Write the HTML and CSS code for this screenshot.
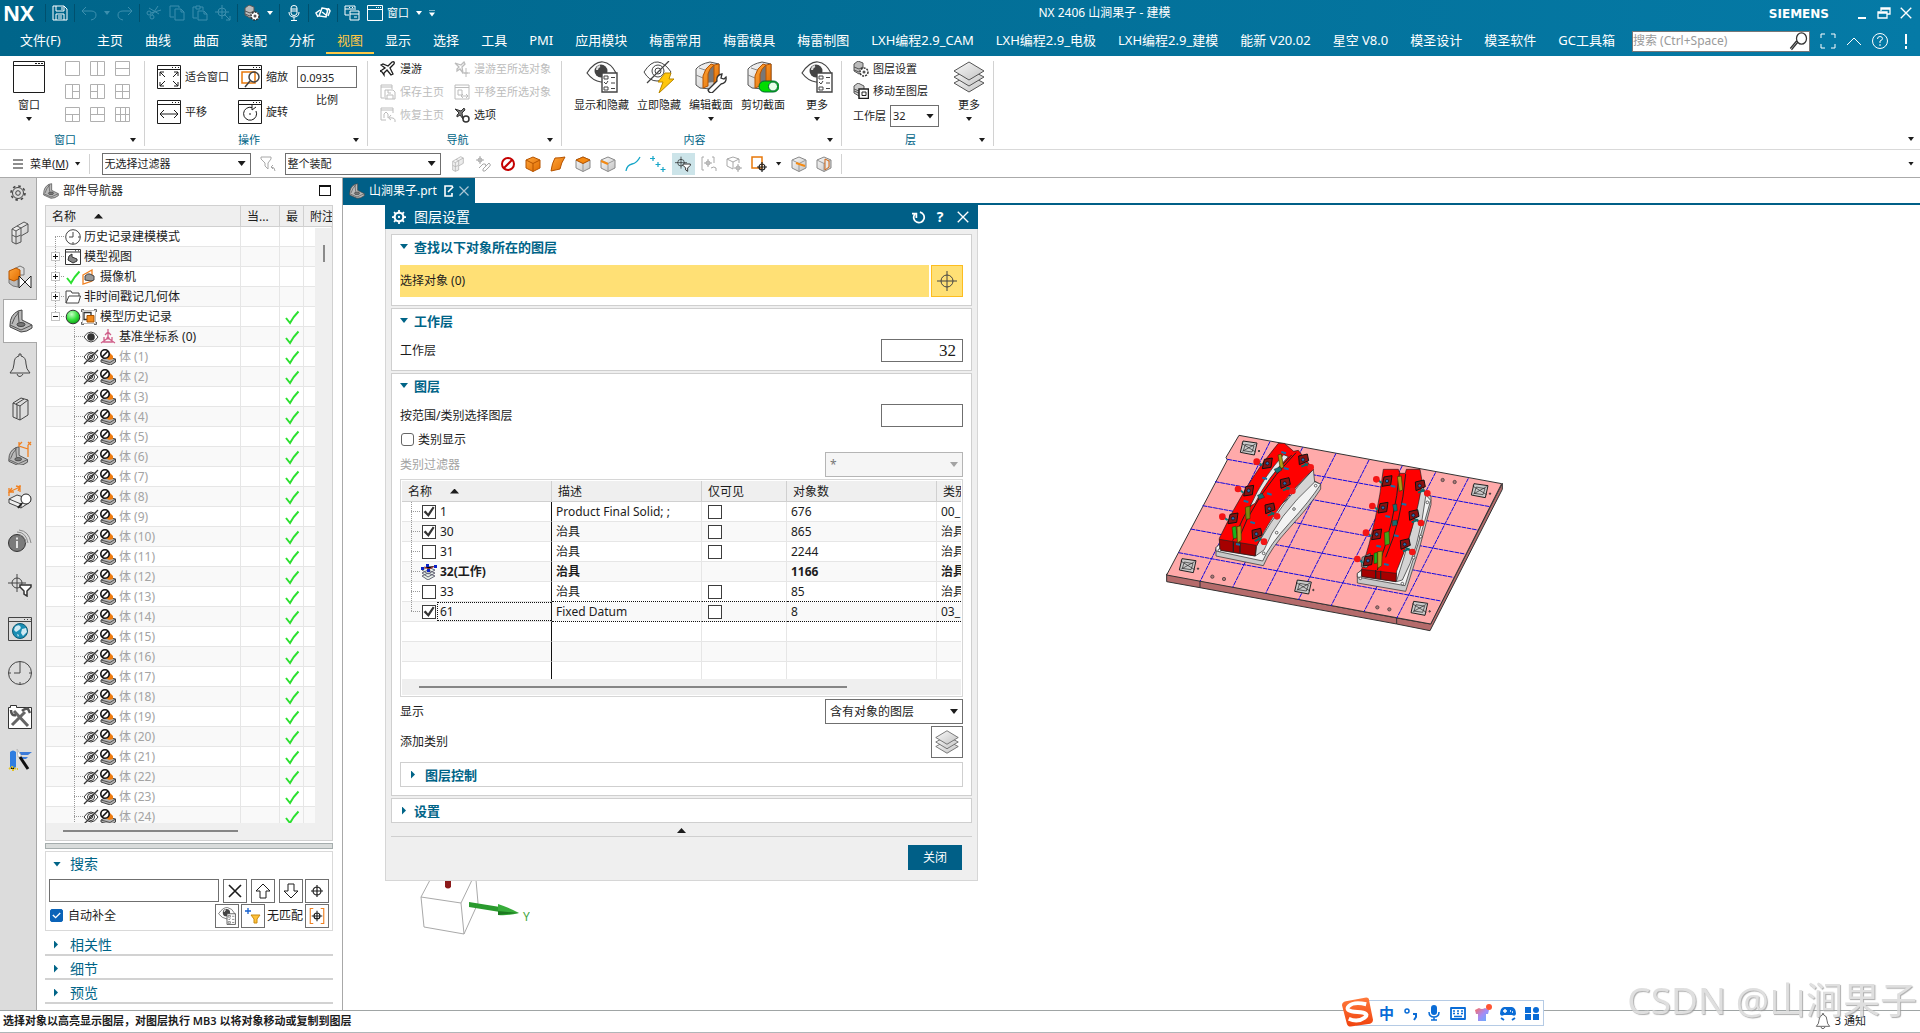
FILE: index.html
```html
<!DOCTYPE html>
<html lang="zh-CN">
<head>
<meta charset="utf-8">
<title>NX 2406 山涧果子 - 建模</title>
<link rel="stylesheet" href="styles.css">
</head>
<body>
<svg class="sprite" aria-hidden="true">
  <defs>
    <linearGradient id="metal" x1="0" y1="0" x2="1" y2="1"><stop offset="0" stop-color="#e4e4e4"/><stop offset="1" stop-color="#8a8a8a"/></linearGradient>
    <linearGradient id="light" x1="0" y1="0" x2="1" y2="1"><stop offset="0" stop-color="#fafafa"/><stop offset="1" stop-color="#c2c2c2"/></linearGradient>
    <linearGradient id="orange" x1="0" y1="0" x2="1" y2="1"><stop offset="0" stop-color="#ffa53a"/><stop offset="1" stop-color="#e06c00"/></linearGradient>
    <linearGradient id="ime" x1="0" y1="0" x2="0" y2="1"><stop offset="0" stop-color="#ff7a3c"/><stop offset="1" stop-color="#f0430f"/></linearGradient>
    <linearGradient id="shirt" x1="0" y1="0" x2="1" y2="1"><stop offset="0" stop-color="#ff6a5a"/><stop offset=".5" stop-color="#a68bf5"/><stop offset="1" stop-color="#5ab4ff"/></linearGradient>
    <radialGradient id="green" cx=".4" cy=".3" r=".7"><stop offset="0" stop-color="#c8ffc8"/><stop offset=".6" stop-color="#34e03c"/><stop offset="1" stop-color="#12a51a"/></radialGradient>
  </defs>
  <symbol id="save" viewBox="0 0 16 16"><path class="ln" d="M1 1h11l3 3v11H1zM4 1v5h8V1M4 15V9h8v6M6 11h4M6 13h4M10 2v3"/></symbol>
  <symbol id="undo" viewBox="0 0 16 16"><path class="ln" d="M5 2L1 6l4 4M1 6h9q5 0 5 4t-5 5"/></symbol>
  <symbol id="redo" viewBox="0 0 16 16"><path class="ln" d="M11 2l4 4-4 4M15 6H6q-5 0-5 4t5 5"/></symbol>
  <symbol id="cut" viewBox="0 0 16 16"><path class="ln" d="M12 1L6 10M3 3l10 6M1 8a2 2 0 1 0 4 0a2 2 0 1 0-4 0M4 12a2 2 0 1 0 4 0a2 2 0 1 0-4 0M5 8l10-3"/></symbol>
  <symbol id="copy" viewBox="0 0 16 16"><path class="ln" d="M10 3V1H1v11h4M6 4h6l3 3v8H6zM12 4v3h3"/></symbol>
  <symbol id="paste" viewBox="0 0 16 16"><path class="ln" d="M5 13H1V2h3M8 2h3v3M4 1h4v3H4zM6 6h6l3 3v6H6zM12 6v3h3"/></symbol>
  <symbol id="aim-arrow" viewBox="0 0 16 16"><path class="ln" d="M7 0v14M0 7h14M3 7a4 4 0 1 0 8 0a4 4 0 1 0-8 0M9 9l6 6M15 11v4h-4"/></symbol>
  <symbol id="stack-gear" viewBox="0 0 16 16"><path d="M1 3l4-3 5 2v9l-4 2-5-3z" fill="#bbb" stroke="#555"/><path d="M1 6l5 2 4-2M1 9l5 2" stroke="#555" fill="none"/><circle cx="11" cy="11" r="4" fill="#fff" stroke="#333" stroke-width="1.5" stroke-dasharray="2 1"/><circle cx="11" cy="11" r="1.5" fill="#555"/></symbol>
  <symbol id="mic" viewBox="0 0 16 16"><path class="ln" d="M5 3q0-2.500 3-2.500T11 3v5q0 2.500-3 2.500T5 8zM5 4h6M5 6h6M3 7q0 5 5 5t5-5M8 12v3M5 15.500h6"/></symbol>
  <symbol id="touch" viewBox="0 0 16 16"><path class="ln" d="M7 3l6 1-2 8-7-1zM5 5L1 8l2 4M11 5q3-3 4 1l-2 5M7 7l4 3" stroke-width="1.500"/></symbol>
  <symbol id="windows" viewBox="0 0 16 16"><path class="ln" d="M5 10H1V1h10v4M1 4h9M6 6h9v9H6zM6 9h9M10 12h3M5 2.500h1M8 2.500h1"/></symbol>
  <symbol id="window" viewBox="0 0 16 16"><path class="ln" d="M.5.5h15v15H.5zM.5 4.500h15M9 2.500h1M11 2.500h1M13 2.500h1"/></symbol>
  <symbol id="bigwin" viewBox="0 0 32 32"><path class="ln" d="M.5.5h31v31H.5zM.5 4.500h31M22 2.500h2M25 2.500h2M28 2.500h2"/></symbol>
  <symbol id="mag" viewBox="0 0 16 16"><path class="ln" d="M6 6a4 4.500 0 1 1 8 0a4 4.500 0 1 1-8 0M7 9l-5 6M6 8l-5 6"/></symbol>
  <symbol id="corners" viewBox="0 0 16 16"><path class="ln" d="M1 5V1h4M11 1h4v4M15 11v4h-4M5 15H1v-4"/></symbol>
  <symbol id="chev" viewBox="0 0 16 16"><path class="ln" d="M1 12l7-7 7 7"/></symbol>
  <symbol id="help" viewBox="0 0 16 16"><path class="ln" d="M.5 8a7.500 7.500 0 1 1 15 0a7.500 7.500 0 1 1-15 0M5.500 6q0-2.500 2.500-2.500t2.500 2.200Q10.500 7 8 8v2M8 11v2"/></symbol>
  <symbol id="fit" viewBox="0 0 24 24"><path class="ln" d="M.5.5h23v23H.5zM.5 4.500h23M15 2.500h1M18 2.500h1M21 2.500h1M3 11V7h4M3 7l5 5M17 7h4v4M21 7l-5 5M3 17v4h4M3 21l5-5M17 21h4v-4M21 21l-5-5"/></symbol>
  <symbol id="pan" viewBox="0 0 24 24"><path class="ln" d="M.5.5h23v23H.5zM.5 4.500h23M15 2.500h1M18 2.500h1M21 2.500h1M3 14h18M7 10l-4 4 4 4M17 10l4 4-4 4"/></symbol>
  <symbol id="zoomw" viewBox="0 0 24 24"><path class="ln" d="M.5.5h23v23H.5zM.5 4.500h23M15 2.500h1M18 2.500h1M21 2.500h1"/><path d="M4 7h13v11H4z" fill="none" stroke="#e8780a" stroke-width="1.500"/><path d="M11 12a5 5 0 1 1 10 0a5 5 0 1 1-10 0M12 16l-5 6" fill="none" stroke="#444" stroke-width="1.500"/></symbol>
  <symbol id="rotate" viewBox="0 0 24 24"><path class="ln" d="M.5.5h23v23H.5zM.5 4.500h23M15 2.500h1M18 2.500h1M21 2.500h1M14 7.500A6.500 6.500 0 1 0 18 11M14 5v5l4-3M12 13v2"/></symbol>
  <symbol id="plane" viewBox="0 0 16 16"><path class="ln" d="M1 4l2-1 5 2 4-4q3-1 2 2l-4 4 3 6-2 1-4-5-3 3v2l-2-3-2-1 2-1 3-2z" stroke-width="1.300"/></symbol>
  <symbol id="plane-to" viewBox="0 0 16 16"><path class="ln" d="M1 2l6 2 3-3 1 2-3 3 1 6-3-4-3 2V8l2-2z" stroke-width="1.300"/><path class="ln" d="M12 7v9M8 12h8M10 12h4"/></symbol>
  <symbol id="plane-gear" viewBox="0 0 16 16"><path d="M1 2l6 2 3-3 1 2-3 3 1 6-3-4-3 2V8l2-2z" fill="#777" stroke="#333"/><circle cx="12" cy="12" r="3" fill="#fff" stroke="#333" stroke-width="1.500"/></symbol>
  <symbol id="savehome" viewBox="0 0 16 16"><path class="ln" d="M12 5V1H1v13h3M1 3h11M5 6h8l2 2v7H5zM7 15v-4h6v4M8 6v3h3"/></symbol>
  <symbol id="backhome" viewBox="0 0 16 16"><path class="ln" d="M13 6V1H1v12h5M1 3h12M4 11V7l2-2 2 2v4M15 15q1-5-6-4M11 8l-2.500 3 2.500 2"/></symbol>
  <symbol id="view-obj" viewBox="0 0 16 16"><path class="ln" d="M1 1h14v14H1zM1 3.500h14M4 6h4v5H4zM7 12h7M9 10l-2 2 2 2M12 10l2 2-2 2"/></symbol>
  <symbol id="eye-list" viewBox="0 0 32 32"><path d="M1 12Q9 0 17 1t13 11Q23 22 15 21T1 12z" fill="#fff" stroke="#444" stroke-width="1.200"/><circle cx="15" cy="10" r="6.500" fill="#444"/><path d="M14 5q-3 1-3 4" stroke="#ddd" fill="none" stroke-width="2"/><path d="M16 12h15v19H16z" fill="#fff" stroke="#444" stroke-width="1.400"/><path d="M18 15h4v3h-4zM18 26h4v3h-4zM18 21l2 2 2-3M25 16.500h4M25 22h4M25 27.500h4" fill="none" stroke="#444"/></symbol>
  <symbol id="eye-flash" viewBox="0 0 32 32"><path d="M1 11Q8 0 15 1t13 10Q22 20 14 20T1 11z" fill="#fff" stroke="#444"/><circle cx="15" cy="10" r="6" fill="none" stroke="#444"/><circle cx="15" cy="10" r="3" fill="none" stroke="#444"/><path d="M26 0L4 22" stroke="#444" stroke-width="1.300"/><path d="M22 12h6l-2 6h5L16 32l4-11h-5z" fill="#ffc60a" stroke="#b98700"/></symbol>
  <symbol id="section" viewBox="0 0 32 32"><path d="M1 8q4-5 14-7l9 2v18l-8 7-11-1-4-3z" fill="url(#light)" stroke="#555"/><path d="M11 22V12q1-7 7-8l1 0v17z" fill="#777"/><path d="M1 14l7 3M4 7l6 2" stroke="#888"/><path d="M8 27V15q2-8 8-12l3 1q-5 4-6 9v12zM19 4l5-1v18l-5 2z" fill="url(#orange)" stroke="#b65400"/></symbol>
  <symbol id="section-edit" viewBox="0 0 32 32"><use href="#section"/><path d="M13 29l9-9q-1-6 5-7l-1 4 3 1 2-2q1 6-5 7l-9 9q-3 0-4-3z" fill="#fff" stroke="#333" stroke-width="1.300"/></symbol>
  <symbol id="section-clip" viewBox="0 0 32 32"><use href="#section"/><rect x="12" y="20" width="20" height="11" rx="5.500" fill="#0d0" stroke="#063"/><circle cx="26" cy="25.500" r="4.500" fill="#e8ffe8" stroke="#063"/></symbol>
  <symbol id="layers" viewBox="0 0 32 32"><path d="M1 22l15-8 15 8-15 9z" fill="url(#light)" stroke="#555"/><path d="M1 16l15-8 15 8-15 9z" fill="url(#light)" stroke="#555"/><path d="M1 10L16 1l15 9-15 9z" fill="url(#light)" stroke="#555"/></symbol>
  <symbol id="layer-move" viewBox="0 0 16 16"><path d="M1 3l4-3 6 3v5l-5 5-5-3z" fill="#ccc" stroke="#555"/><path d="M1 6l5 2 5-2M1 8l5 2" stroke="#555" fill="none"/><path d="M6 6h9.500v9.500H6z" fill="#fff" stroke="#222" stroke-width="1.500"/><path d="M9 12.500V9h4v3.500z" fill="none" stroke="#222"/></symbol>
  <symbol id="funnel" viewBox="0 0 16 16"><path class="ln" d="M1 1h10v2L8 7v6l-3-3V7L1 3zM15 15q0-4-4-4M13 9l-2 2 2 2"/></symbol>
  <symbol id="cube" viewBox="0 0 16 16"><path d="M8 1l7 3v8l-7 3.500L1 12V4z" fill="url(#light)" stroke="#888"/><path d="M1 4l7 3.500L15 4M8 7.500v8" fill="none" stroke="#999"/></symbol>
  <symbol id="cube-orange" viewBox="0 0 16 16"><path d="M8 1l7 3v8l-7 3.500L1 12V4z" fill="url(#orange)" stroke="#b65400"/><path d="M1 4l7 3.500L15 4M8 7.500v8" fill="none" stroke="#b65400"/></symbol>
  <symbol id="face-orange" viewBox="0 0 16 16"><path d="M5 2q5 0 10-1-4 6-5 12l-9 2q1-8 4-13z" fill="url(#orange)" stroke="#b65400"/></symbol>
  <symbol id="cube-top" viewBox="0 0 16 16"><use href="#cube"/><path d="M8 1l7 3-7 3.500L1 4z" fill="#f58a12" stroke="#b65400"/></symbol>
  <symbol id="cube-edge" viewBox="0 0 16 16"><use href="#cube"/><path d="M1 5l7 3" stroke="#f58a12" stroke-width="2"/></symbol>
  <symbol id="cube-cut" viewBox="0 0 16 16"><use href="#cube"/><path d="M5 7l9 3" stroke="#f58a12" stroke-width="2"/></symbol>
  <symbol id="cube-slice" viewBox="0 0 16 16"><use href="#cube"/><path d="M9 3v11l4-3V5z" fill="#e8e8e8" stroke="#d26510"/></symbol>
  <symbol id="links" viewBox="0 0 16 16"><path class="ln" d="M5 0v8M1 4h8M3 4a2 2 0 1 0 4 0a2 2 0 1 0-4 0M8 13l6-6q3 2 0 4l-4 4q-3 1-2-2zM4 12l4-4q3-1 3 2"/></symbol>
  <symbol id="no" viewBox="0 0 16 16"><circle cx="8" cy="8" r="6" fill="#fff" stroke="#c40000" stroke-width="2"/><path d="M12 4l-8 8" stroke="#c40000" stroke-width="2"/></symbol>
  <symbol id="curve" viewBox="0 0 16 16"><path d="M1 15q1-6 6-7t8-7" fill="none" stroke="#16a6c8" stroke-width="1.300"/></symbol>
  <symbol id="points" viewBox="0 0 16 16"><path d="M3 0v5M0 2.500h5M8 6v5M5.500 8.500h5M13 11v5M10.500 13.500h5" stroke="#16a6c8" stroke-width="1.200"/></symbol>
  <symbol id="aim-filter" viewBox="0 0 24 24"><path class="ln" d="M9 1v18M0 10h18M4 10a5 5 0 1 0 10 0a5 5 0 1 0-10 0"/><path d="M12 12h11v2l-4 4v5l-3-2v-3l-4-4z" fill="#fff" stroke="#333" stroke-width="1.500"/></symbol>
  <symbol id="aim-box" viewBox="0 0 16 16"><path class="ln" d="M3 1H1v13h2M11 1h2v6M7 3v8M3 7h8M5 7a2 2 0 1 0 4 0a2 2 0 1 0-4 0M10 12q3-2 5 0v3"/></symbol>
  <symbol id="cube-aim" viewBox="0 0 16 16"><path class="ln" d="M1 3l6-2 6 2-6 3zM1 3v7l6 3V6M13 3v4M12 8v8M8 12h8M10 12a2 2 0 1 0 4 0a2 2 0 1 0-4 0"/></symbol>
  <symbol id="rect-aim" viewBox="0 0 16 16"><path d="M1 1h10v11H1z" fill="none" stroke="#e8780a" stroke-width="1.500"/><path d="M11 6v10M6 11h10M8 11a3 3 0 1 0 6 0a3 3 0 1 0-6 0" fill="none" stroke="#222" stroke-width="1.200"/></symbol>
  <symbol id="gear" viewBox="0 0 16 16"><circle cx="8" cy="8" r="5.500" class="ln"/><circle cx="8" cy="8" r="2.300" class="ln"/><circle cx="8" cy="8" r="7" fill="none" stroke="currentColor" stroke-width="1.600" stroke-dasharray="2.600 2.900"/></symbol>
  <symbol id="gear-bold" viewBox="0 0 16 16"><circle cx="8" cy="8" r="5" fill="none" stroke="currentColor" stroke-width="2.500"/><circle cx="8" cy="8" r="1.300" fill="currentColor"/><path d="M8 0v3M8 13v3M0 8h3M13 8h3M2.300 2.300l2 2M11.700 11.700l2 2M13.700 2.300l-2 2M2.300 13.700l2-2" stroke="currentColor" stroke-width="2"/></symbol>
  <symbol id="assembly" viewBox="0 0 24 24"><path d="M4 8l5-3 7-4 4 2v8l-7 4v6l-5 2-4-2z" fill="url(#light)" stroke="#555"/><path d="M4 8l4 2v13M8 10l5-3M4 14l4 2 5-2M13 14V7l7-4M9 5l4 2" fill="none" stroke="#555"/></symbol>
  <symbol id="constraint" viewBox="0 0 24 24"><path d="M6 4l6-3 4 2v7H6z" fill="#ddd" stroke="#777"/><path d="M1 14h9v8l-5-1-4-3z" fill="#bbb" stroke="#777"/><path d="M1 6l7-3 4 2v8l-6 3-5-2z" fill="url(#orange)" stroke="#b65400"/><path d="M11 11l12 12V11L11 23z" fill="#fff" stroke="#222"/></symbol>
  <symbol id="bracket" viewBox="0 0 24 24"><path d="M1 16Q1 6 9 2l4-1v10l10 5v3q-5 4-11 4L1 18z" fill="#b9b9b9" stroke="#444"/><path d="M1 16l11 5 11-5M9 2l1 11M3 15q2-7 7-12" fill="none" stroke="#555"/><ellipse cx="12" cy="15.500" rx="4" ry="2" fill="#777" stroke="#444"/></symbol>
  <symbol id="bracket-dim" viewBox="0 0 24 24"><g transform="translate(0 5) scale(.85)"><use href="#bracket" width="24" height="24"/></g><path d="M11 1v4l9 3M20 4v12M20 1l3 3M23 1l-3 3M14 1l-3 3" stroke="#f08020" fill="none" stroke-width="1.300"/></symbol>
  <symbol id="bell" viewBox="0 0 24 24"><path class="ln" d="M2 20h20q-4-4-4-9 0-7-5-8V1h-2v2q-5 1-5 8 0 5-4 9zM9 21q1 3 3 2.500t3-2.500"/></symbol>
  <symbol id="books" viewBox="0 0 24 24"><path class="ln" d="M5 6l8-5 7 2v15l-8 5-7-3zM5 6l7 3v14M12 9l8-6M8 7l8-5M9 8v13"/></symbol>
  <symbol id="measure" viewBox="0 0 24 24"><path d="M1 14l8-4 13 4v3l-9 6-12-5z" fill="#eee" stroke="#444"/><path d="M1 14l12 5 9-5M13 19v4" fill="none" stroke="#444"/><path d="M1 11V3M12 7V0M1 7l11-5M4 3L1 7l5 0M8 1l4 1-2 4" fill="none" stroke="#f08020" stroke-width="1.300"/><circle cx="18" cy="14" r="5" fill="#fff" stroke="#222"/><path d="M14 18l-4 5" stroke="#222" stroke-width="2"/></symbol>
  <symbol id="info" viewBox="0 0 24 24"><circle cx="9" cy="14" r="8.500" fill="#7b7b7b" stroke="#333"/><path d="M9 12v7M9 8.500v2" stroke="#fff" stroke-width="1.600"/><path d="M9 3q9 0 11 11M11 1q10 1 12 13M12 6q5 1 6 8" fill="none" stroke="#888"/></symbol>
  <symbol id="web" viewBox="0 0 24 24"><path class="ln" d="M.5.5h23v23H.5zM.5 4.500h23M16 2.500h1M19 2.500h1M22 2.500h.5"/><circle cx="12" cy="14" r="7.500" fill="#1a8eb4" stroke="#0d5b75"/><path d="M7 10q3-3 5-1t-1 4-3 2-2-2zM14 12l4-1 1 4-4 4-2-3zM9 17l2 1-1 2z" fill="#cfeaf3"/></symbol>
  <symbol id="clock" viewBox="0 0 24 24"><path class="ln" d="M.5 12a11.500 11.500 0 1 1 23 0a11.500 11.500 0 1 1-23 0M12 3v9H6M12 1v2M12 21v2M1 12h2M21 12h2"/></symbol>
  <symbol id="clockw" viewBox="0 0 16 16"><circle cx="8" cy="8" r="7.300" fill="#fff" stroke="#444"/><path d="M8 3v5H4M8 13v2M13 8h2" fill="none" stroke="#444"/></symbol>
  <symbol id="tools" viewBox="0 0 24 24"><path d="M.5 2.500h2v-2h6v2h15v21H.5z" fill="#fff" stroke="#333"/><path d="M4 20L17 7M6 6l14 15" stroke="#666" stroke-width="3"/><path d="M3 5q0 6 5 5M14 6q3-3 6-2l2 4" stroke="#555" stroke-width="2.500" fill="none"/></symbol>
  <symbol id="wizard" viewBox="0 0 24 24"><path d="M2 3q3-3 6 0v15q-3 3-6 0z" fill="#2f7de0"/><path d="M10 3h14l-4 3h-8zM12 8h8l-2 2h-6z" fill="#3d7bd8"/><path d="M9 0l5 8-4 0z" fill="#fff" stroke="#bbb"/><path d="M12 8l8 12" stroke="#111" stroke-width="3"/><path d="M1 20l3-2 4 2 2 0M5 22v-3" stroke="#e3c323" stroke-width="2" stroke-dasharray="2 1"/></symbol>
  <symbol id="modelview" viewBox="0 0 16 16"><path d="M.5.5h15v15H.5zM.5 3h15M10 1.800h1M13 1.800h1" fill="#fff" stroke="#333"/><path d="M3 11q0-5 4-6v3l5 2v2l-4 2z" fill="#888" stroke="#333"/></symbol>
  <symbol id="camera" viewBox="0 0 16 16"><path d="M2 6l9-5v11l-9 3z" fill="none" stroke="#f08020" stroke-width="1.300"/><path d="M4 7q3-3 5-2l4 2v4l-3 1-6-1z" fill="#999" stroke="#444"/></symbol>
  <symbol id="ok" viewBox="0 0 16 16"><path d="M2 9l4 5Q9 8 14.500 2.500" fill="none" stroke="#2be02f" stroke-width="2"/></symbol>
  <symbol id="folder" viewBox="0 0 16 16"><path d="M1 14V2h5l1 2h7v3M1 14L4 7h11.500l-2 7z" fill="#fff" stroke="#444"/></symbol>
  <symbol id="ball" viewBox="0 0 16 16"><circle cx="8" cy="8" r="6.800" fill="url(#green)" stroke="#333"/></symbol>
  <symbol id="history" viewBox="0 0 16 16"><path d="M.5 3V.5H3M13 .5h2.500V3M15.500 13v2.500H13M3 15.500H.500V13" fill="none" stroke="#666"/><path d="M1.500 1.500h13v13h-13z" fill="none" stroke="#bbb"/><path d="M3 3.500h7v7H3z" fill="#fff" stroke="#333" stroke-width="1.300"/><path d="M6 6.500h7v6.500H6z" fill="#f28a1c" stroke="#a65200"/></symbol>
  <symbol id="eye" viewBox="0 0 16 16"><path d="M1 8q3-5 7-5t7 5q-3 5-7 5T1 8z" fill="#fff" stroke="#444"/><circle cx="8" cy="8" r="3.800" fill="#333"/></symbol>
  <symbol id="eye-off" viewBox="0 0 16 16"><path d="M1 8q3-5 7-5t7 5q-3 5-7 5T1 8z" fill="#fff" stroke="#333"/><circle cx="8" cy="8" r="3.500" fill="none" stroke="#333"/><circle cx="8" cy="8" r="1.500" fill="none" stroke="#333"/><path d="M15 1L1 15" stroke="#333" stroke-width="1.200"/></symbol>
  <symbol id="csys" viewBox="0 0 16 16"><path d="M8 0v9M8 9l-7 5M8 9l7 5M5 6l3-3 3 3M4 8v5h8V8" fill="none" stroke="#d0608a" stroke-width="1.300"/><circle cx="8" cy="9" r="1.600" fill="#d0608a"/></symbol>
  <symbol id="body" viewBox="0 0 16 16"><path d="M1 11l5-3 9.500 2v3l-5 3-9.500-3z" fill="#b4b4b4" stroke="#444"/><path d="M1 11l9 2.500 5.500-3.500" fill="none" stroke="#555"/><path d="M7 5l3-1 3 3v3l-4 1-3-2z" fill="#ef7d12"/><circle cx="5" cy="5" r="4.200" fill="#fff" stroke="#111" stroke-width="1.600"/><path d="M8 2L2 8" stroke="#111" stroke-width="1.600"/></symbol>
  <symbol id="work" viewBox="0 0 16 16"><path d="M1 12l6-3 7 3-7 4zM1 9l6-3 7 3-7 4zM1 6l6-3 7 3-7 4z" fill="#e6efe8" stroke="#667"/><path d="M3 3l5 2 6-3" stroke="#a33"/><path d="M0 3h3v3H0zM5 0h3v3H5zM13 1h3v3h-3zM6 5h3v3H6z" fill="#0a22c8"/></symbol>
  <symbol id="aim" viewBox="0 0 24 24"><path class="ln" d="M12 2v20M2 12h20M6 12a6 6 0 1 0 12 0a6 6 0 1 0-12 0"/></symbol>
  <symbol id="aim-small" viewBox="0 0 16 16"><path class="ln" d="M8 2v12M2 8h12M4 8a4 4 0 1 0 8 0a4 4 0 1 0-8 0" stroke-width="1.200"/></symbol>
  <symbol id="aim-bracket" viewBox="0 0 24 24"><path class="ln" d="M12 5v14M5 12h14M8 12a4 4 0 1 0 8 0a4 4 0 1 0-8 0" stroke-width="1.500"/><path d="M7 2H3v20h4M17 2h4v20h-4" fill="none" stroke="#f08020" stroke-width="1.500"/></symbol>
  <symbol id="cross" viewBox="0 0 16 16"><path d="M2 2l12 12M14 2L2 14" fill="none" stroke="currentColor" stroke-width="1.600"/></symbol>
  <symbol id="up" viewBox="0 0 16 16"><path class="ln" d="M8 1l7 7h-4v7H5V8H1z"/></symbol>
  <symbol id="down" viewBox="0 0 16 16"><path class="ln" d="M8 15L1 8h4V1h6v7h4z"/></symbol>
  <symbol id="add-filter" viewBox="0 0 16 16"><path d="M3 0v6M0 3h6" stroke="#1560d0" stroke-width="1.300"/><path d="M6 7h9l-3 4v4H9v-4z" fill="#ffc23a" stroke="#c88a10"/></symbol>
  <symbol id="edit" viewBox="0 0 12 12"><path d="M8 1H2v10h7V8M5 7l5-5M8 1h1l1 2" fill="none" stroke="#fff" stroke-width="1.600"/></symbol>
  <symbol id="reset" viewBox="0 0 16 16"><path d="M9 2.500A6 6 0 1 1 3 5M0 4h5v5" fill="none" stroke="#fff" stroke-width="2"/></symbol>
</svg>

<header class="topbar">
  <div class="titlebar">
    <div class="quick">
      <strong class="nx">NX</strong><i class="vsep"></i>
      <button aria-label="保存"><svg class="i16"><use href="#save"/></svg></button><i class="vsep"></i>
      <button class="off" aria-label="撤消"><svg class="i16"><use href="#undo"/></svg></button>
      <i class="tri off"></i>
      <button class="off" aria-label="重做"><svg class="i16"><use href="#redo"/></svg></button><i class="vsep"></i>
      <button class="off" aria-label="剪切"><svg class="i16"><use href="#cut"/></svg></button>
      <button class="off" aria-label="复制"><svg class="i16"><use href="#copy"/></svg></button>
      <button class="off" aria-label="粘贴"><svg class="i16"><use href="#paste"/></svg></button>
      <button class="off" aria-label="重复命令"><svg class="i16"><use href="#aim-arrow"/></svg></button><i class="vsep"></i>
      <button aria-label="图层"><svg class="i16"><use href="#stack-gear"/></svg></button>
      <i class="tri"></i><i class="vsep"></i>
      <button aria-label="语音"><svg class="i16"><use href="#mic"/></svg></button><i class="vsep"></i>
      <button aria-label="触控"><svg class="i16"><use href="#touch"/></svg></button><i class="vsep"></i>
      <button aria-label="切换窗口"><svg class="i16"><use href="#windows"/></svg></button>
      <button class="win-menu"><svg class="i16"><use href="#window"/></svg>窗口</button>
      <i class="tri"></i><i class="tri bar"></i>
    </div>
    <div class="title">NX 2406 山涧果子 - 建模</div>
    <strong class="siemens">SIEMENS</strong>
    <div class="winctl">
      <button aria-label="最小化"><svg class="i14" viewBox="0 0 14 14"><path d="M3 12h8" stroke="#fff" stroke-width="2"/></svg></button>
      <button aria-label="还原"><svg class="i14" viewBox="0 0 14 14"><path d="M4 5V2h9v6h-3M1 6h9v6H1zM4 3h9M1 7h9" stroke="#fff" fill="none" stroke-width="1.300"/></svg></button>
      <button aria-label="关闭窗口"><svg class="i14"><use href="#cross"/></svg></button>
    </div>
  </div>
  <div class="menubar">
    <nav class="tabs">
      <a href="#" class="file">文件(F)</a><a href="#">主页</a><a href="#">曲线</a><a href="#">曲面</a><a href="#">装配</a><a href="#">分析</a><a href="#" class="on">视图</a><a href="#">显示</a><a href="#">选择</a><a href="#">工具</a><a href="#">PMI</a><a href="#">应用模块</a><a href="#">梅雷常用</a><a href="#">梅雷模具</a><a href="#">梅雷制图</a><a href="#">LXH编程2.9_CAM</a><a href="#">LXH编程2.9_电极</a><a href="#">LXH编程2.9_建模</a><a href="#">能新 V20.02</a><a href="#">星空 V8.0</a><a href="#">模圣设计</a><a href="#">模圣软件</a><a href="#">GC工具箱</a>
    </nav>
    <div class="find"><input type="text" aria-label="搜索命令" placeholder="搜索 (Ctrl+Space)"><svg class="i20"><use href="#mag"/></svg></div>
    <div class="menu-icons">
      <button aria-label="全屏"><svg class="i16"><use href="#corners"/></svg></button>
      <button aria-label="折叠功能区"><svg class="i16"><use href="#chev"/></svg></button>
      <button aria-label="帮助"><svg class="i16"><use href="#help"/></svg></button>
      <button aria-label="提示"><svg class="i16" viewBox="0 0 16 16"><path d="M8 1v10M8 13v3" stroke="#fff" stroke-width="2"/></svg></button>
    </div>
  </div>
</header>

<section class="ribbon">
  <div class="group">
    <div class="gbody g-window">
      <button class="big"><svg class="i32"><use href="#bigwin"/></svg>窗口<i class="tri"></i></button>
      <div class="layouts">
        <svg viewBox="0 0 15 15"><path d="M.5.5h14v14H.5z"/></svg><svg viewBox="0 0 15 15"><path d="M.5.5h14v14H.5zM7.500 0v15"/></svg><svg viewBox="0 0 15 15"><path d="M.5.5h14v14H.5zM0 7.500h15"/></svg>
        <svg viewBox="0 0 15 15"><path d="M.5.5h14v14H.5zM7.500 0v15M7.500 7.500H15"/></svg><svg viewBox="0 0 15 15"><path d="M.5.5h14v14H.5zM7.500 0v15M0 7.500h7.500"/></svg><svg viewBox="0 0 15 15"><path d="M.5.5h14v14H.5zM7.500 0v15M0 7.500h15"/></svg>
        <svg viewBox="0 0 15 15"><path d="M.5.5h14v14H.5zM0 7.500h15M7.500 7.500V15"/></svg><svg viewBox="0 0 15 15"><path d="M.5.5h14v14H.5zM0 7.500h15M7.500 0v7.500"/></svg><svg viewBox="0 0 15 15"><path d="M.5.5h14v14H.5zM0 7.500h15M5.500 0v15M10.500 0v15"/></svg>
      </div>
    </div>
    <div class="gfoot"><span>窗口</span><i class="tri"></i></div>
  </div>
  <div class="group">
    <div class="gbody g-ops">
      <button class="mid"><svg class="i24"><use href="#fit"/></svg>适合窗口</button>
      <button class="mid"><svg class="i24"><use href="#zoomw"/></svg>缩放</button>
      <label class="ratio"><input type="text" value="0.0935">比例</label>
      <button class="mid"><svg class="i24"><use href="#pan"/></svg>平移</button>
      <button class="mid"><svg class="i24"><use href="#rotate"/></svg>旋转</button>
    </div>
    <div class="gfoot"><span>操作</span><i class="tri"></i></div>
  </div>
  <div class="group">
    <div class="gbody g-nav">
      <button class="small"><svg class="i16"><use href="#plane"/></svg>漫游</button>
      <button class="small" disabled><svg class="i16"><use href="#plane-to"/></svg>漫游至所选对象</button>
      <button class="small" disabled><svg class="i16"><use href="#savehome"/></svg>保存主页</button>
      <button class="small" disabled><svg class="i16"><use href="#view-obj"/></svg>平移至所选对象</button>
      <button class="small" disabled><svg class="i16"><use href="#backhome"/></svg>恢复主页</button>
      <button class="small"><svg class="i16"><use href="#plane-gear"/></svg>选项</button>
    </div>
    <div class="gfoot"><span>导航</span><i class="tri"></i></div>
  </div>
  <div class="group">
    <div class="gbody g-content">
      <button class="big"><svg class="i32"><use href="#eye-list"/></svg>显示和隐藏</button>
      <button class="big"><svg class="i32"><use href="#eye-flash"/></svg>立即隐藏</button>
      <button class="big"><svg class="i32"><use href="#section-edit"/></svg>编辑截面<i class="tri"></i></button>
      <button class="big"><svg class="i32"><use href="#section-clip"/></svg>剪切截面</button>
      <button class="big more"><svg class="i32"><use href="#eye-list"/></svg>更多<i class="tri"></i></button>
    </div>
    <div class="gfoot"><span>内容</span><i class="tri"></i></div>
  </div>
  <div class="group">
    <div class="gbody g-layer">
      <div class="stack">
        <button class="small"><svg class="i16"><use href="#stack-gear"/></svg>图层设置</button>
        <button class="small"><svg class="i16"><use href="#layer-move"/></svg>移动至图层</button>
        <label class="worklayer">工作层<span class="combo"><select><option>32</option></select></span></label>
      </div>
      <button class="big more"><svg class="i32"><use href="#layers"/></svg>更多<i class="tri"></i></button>
    </div>
    <div class="gfoot"><span>层</span><i class="tri"></i></div>
  </div>
  <i class="tri tail"></i>
</section>

<section class="selbar">
  <button class="menu-btn"><svg class="i12" viewBox="0 0 12 12"><path class="ln" d="M1 2h10M1 6h10M1 10h10"/></svg><span>菜单(<u>M</u>)</span><i class="tri"></i></button><i class="vline"></i>
  <span class="combo c-filter"><select aria-label="选择过滤器"><option>无选择过滤器</option></select></span>
  <button class="ghost funnel" aria-label="重置过滤器"><svg class="i16"><use href="#funnel"/></svg></button>
  <span class="combo c-scope"><select aria-label="选择范围"><option>整个装配</option></select></span>
  <div class="tools">
    <button class="ghost faint" aria-label="零件"><svg class="i16"><use href="#assembly"/></svg></button>
    <button class="ghost" aria-label="链"><svg class="i16"><use href="#links"/></svg></button>
    <button aria-label="禁止"><svg class="i16"><use href="#no"/></svg></button>
    <button aria-label="实体"><svg class="i16"><use href="#cube-orange"/></svg></button>
    <button aria-label="片体"><svg class="i16"><use href="#face-orange"/></svg></button>
    <button aria-label="面"><svg class="i16"><use href="#cube-top"/></svg></button>
    <button aria-label="边"><svg class="i16"><use href="#cube-edge"/></svg></button>
    <button aria-label="曲线选择"><svg class="i16"><use href="#curve"/></svg></button>
    <button aria-label="点选择"><svg class="i16"><use href="#points"/></svg></button>
    <button class="hot" aria-label="点过滤"><svg class="i16"><use href="#aim-filter"/></svg></button>
    <button class="ghost" aria-label="取消选择"><svg class="i16"><use href="#aim-box"/></svg></button>
    <button class="ghost" aria-label="体选择"><svg class="i16"><use href="#cube-aim"/></svg></button>
    <button aria-label="矩形选择"><svg class="i16"><use href="#rect-aim"/></svg></button>
    <i class="tri"></i>
    <button aria-label="截面一"><svg class="i16"><use href="#cube-cut"/></svg></button>
    <button aria-label="截面二"><svg class="i16"><use href="#cube-slice"/></svg></button>
    <i class="vline"></i>
  </div>
  <i class="tri tail"></i>
</section>

<main class="work">
  <nav class="rail">
    <button class="first" aria-label="资源条选项"><svg class="i16"><use href="#gear"/></svg></button>
    <button aria-label="装配导航器"><svg class="i24"><use href="#assembly"/></svg></button>
    <button aria-label="约束导航器"><svg class="i24"><use href="#constraint"/></svg></button>
    <button class="on" aria-label="部件导航器"><svg class="i24"><use href="#bracket"/></svg></button>
    <button aria-label="通知中心"><svg class="i24"><use href="#bell"/></svg></button>
    <button aria-label="重用库"><svg class="i24"><use href="#books"/></svg></button>
    <button aria-label="可视化报告"><svg class="i24"><use href="#bracket-dim"/></svg></button>
    <button aria-label="测量"><svg class="i24"><use href="#measure"/></svg></button>
    <button aria-label="信息"><svg class="i24"><use href="#info"/></svg></button>
    <button aria-label="选择过滤"><svg class="i24"><use href="#aim-filter"/></svg></button>
    <button aria-label="浏览器"><svg class="i24"><use href="#web"/></svg></button>
    <button aria-label="历史"><svg class="i24"><use href="#clock"/></svg></button>
    <button aria-label="加工工具"><svg class="i24"><use href="#tools"/></svg></button>
    <button aria-label="向导"><svg class="i24"><use href="#wizard"/></svg></button>
  </nav>

  <aside class="navigator">
    <h2 class="nav-title"><svg class="i16"><use href="#bracket"/></svg><span>部件导航器</span><button aria-label="最大化"></button></h2>
    <div class="tree">
      <div class="tree-clip">
        <table>
          <colgroup><col><col class="c39"><col class="c24"><col class="c28"></colgroup>
          <thead><tr><th>名称<i class="tri up"></i></th><th>当...</th><th>最</th><th>附注</th></tr></thead>
          <tbody id="tree-rows">
            <tr><td><div class="node"><i class="twig t-first"></i><svg class="i16"><use href="#clockw"/></svg><span>历史记录建模模式</span></div></td><td></td><td></td><td></td></tr>
            <tr><td><div class="node"><i class="twig"><b class="exp plus"></b></i><svg class="i16"><use href="#modelview"/></svg><span>模型视图</span></div></td><td></td><td></td><td></td></tr>
            <tr><td><div class="node"><i class="twig"><b class="exp plus"></b></i><svg class="i16"><use href="#ok"/></svg><svg class="i16"><use href="#camera"/></svg><span>摄像机</span></div></td><td></td><td></td><td></td></tr>
            <tr><td><div class="node"><i class="twig"><b class="exp plus"></b></i><svg class="i16"><use href="#folder"/></svg><span>非时间戳记几何体</span></div></td><td></td><td></td><td></td></tr>
            <tr><td><div class="node"><i class="twig t-last"><b class="exp"></b></i><svg class="i16"><use href="#ball"/></svg><svg class="i16"><use href="#history"/></svg><span>模型历史记录</span></div></td><td></td><td><svg class="i16"><use href="#ok"/></svg></td><td></td></tr>
            <tr><td><div class="node child"><i class="twig"></i><svg class="i16"><use href="#eye"/></svg><svg class="i16"><use href="#csys"/></svg><span>基准坐标系 (0)</span></div></td><td></td><td><svg class="i16"><use href="#ok"/></svg></td><td></td></tr>
          </tbody>
        </table>
        <div class="vscroll"><i></i></div>
      </div>
      <div class="hscroll"><i></i></div>
    </div>
    <div class="splitter"></div>
    <section class="search">
      <h3><i class="tri teal"></i>搜索</h3>
      <div class="srow">
        <input type="text" aria-label="搜索部件">
        <button aria-label="清除"><svg class="i16"><use href="#cross"/></svg></button>
        <button aria-label="上一个"><svg class="i16"><use href="#up"/></svg></button>
        <button aria-label="下一个"><svg class="i16"><use href="#down"/></svg></button>
        <button class="tight" aria-label="定位"><svg class="i16"><use href="#aim-small"/></svg></button>
      </div>
      <div class="srow">
        <label class="auto"><input type="checkbox" class="blue" checked>自动补全</label>
        <button aria-label="显示列表"><svg class="i18"><use href="#eye-list"/></svg></button>
        <button class="tight" aria-label="添加过滤"><svg class="i16"><use href="#add-filter"/></svg></button>
        <span class="nomatch">无匹配</span>
        <button class="tight" aria-label="定位匹配"><svg class="i18"><use href="#aim-bracket"/></svg></button>
      </div>
    </section>
    <h3 class="fold"><i class="tri right teal"></i>相关性</h3>
    <h3 class="fold"><i class="tri right teal"></i>细节</h3>
    <h3 class="fold"><i class="tri right teal"></i>预览</h3>
  </aside>

  <section class="graphics">
    <div class="doc-tabs"><div class="doc"><svg class="i16"><use href="#bracket"/></svg><span>山涧果子.prt</span><svg class="i12"><use href="#edit"/></svg><button aria-label="关闭标签"><svg class="i12"><use href="#cross"/></svg></button></div></div>
    <div class="canvas">
      <svg class="triad" viewBox="0 0 120 56"><path d="M11 17l9-17M11 17l40 6 3 31-40-7zM51 23L62 0M54 54l14-31-2-23" fill="none" stroke="#a9a9a9"/><path d="M35 0h6v7q-3 3-6 0z" fill="#8c1a1a"/><path d="M59 22l31 5v5l-31-5z" fill="#2a9a2e"/><path d="M88 24q12 4 21 9-11 3-21 2z" fill="#37ad3a"/><path d="M88 31l21 2-21 2z" fill="#1c7a20"/><text x="113" y="41">Y</text></svg>

      <svg class="model" viewBox="0 0 1140 720">
        <path d="M80 492l100 20 590 112 102 18 215-422v18L870 662l-100-20-590-109-100-18z" fill="#b56b6b" stroke="#333" stroke-width="3"/>
        <path d="M297 76l788 145-213 421L80 495l182-345-4-8z" fill="#ffaaaa" stroke="#333" stroke-width="3"/>
        <path class="blue-grid" d="M262 148l788 142M225 215l788 145M188 287l787 145M152 357l788 145M116 428l787 145M390 95L180 515M488 112L278 532M588 130L377 550M687 150L475 570M787 167L573 588M887 187L672 605M985 205L770 625"/>
        <path d="M180 512v21M770 624v18" stroke="#333" stroke-width="3"/>
        <g id="pad" fill="#c9c9c9" stroke="#222" stroke-width="3"><path d="M309 93l42 6-8 36-42-8z"/><path d="M316 103l26 5-6 18-26-4zM305 100l42 26M347 102l-40 22" fill="none" stroke-width="2"/><circle cx="357" cy="123" r="2"/></g>
        <use href="#pad" x="-183" y="353"/><use href="#pad" x="163" y="417"/><use href="#pad" x="693" y="128"/><use href="#pad" x="512" y="481"/>
        <g fill="#a77" stroke="#333" stroke-width="2"><circle cx="217" cy="500" r="5"/><circle cx="252" cy="507" r="5"/><circle cx="908" cy="210" r="5"/><circle cx="944" cy="216" r="5"/><circle cx="712" cy="592" r="5"/><circle cx="748" cy="598" r="5"/></g>
        <g stroke="#222" stroke-width="2">
          <path d="M238 403l-10 10v25l142 29q20-50 80-115t92-115v-14l-18-10z" fill="#c9c9c9"/>
          <path d="M238 403l-10 10 0 10 140 30q20-48 80-113t94-117l-18-8z" fill="#f3f3f3"/>
          <path d="M520 178l4 38Q410 320 372 420l-26 18 3-30Q430 270 520 178z" fill="#d4d4d4"/>
          <path d="M238 385Q320 210 415 100h18l28 24 14-3 45 57Q410 280 349 410l-3 28-106-17z" fill="#f00"/>
          <path d="M238 388l110 18-3 32-105-18z" fill="#a60000"/>
          <path d="M292 396q50-140 176-268M455 135Q340 240 278 392" fill="none" stroke-width="3"/>
          <path d="M445 140q-60 60-100 140l-14 8q40-90 100-154z" fill="#e8e8e8"/>
          <path d="M280 425v-30M300 428v-30" fill="none" stroke-width="4"/>
        </g>
        <g stroke="#222" stroke-width="2">
          <path d="M663 482l-11 8v29l145 25q45-130 76-260v-26l-16-4z" fill="#c9c9c9"/>
          <path d="M663 482l-11 8v11l143 26q42-130 77-256l-15-17z" fill="#f3f3f3"/>
          <path d="M845 215l12 45q-20 160-70 250l-18 5q50-150 76-300z" fill="#d4d4d4"/>
          <path d="M730 178h45l5 12h16l3-12h41l7 40q-20 130-77 265l-2 32-103-15v-22q48-150 65-300z" fill="#f00"/>
          <path d="M665 478l104 12-1 25-103-16z" fill="#a60000"/>
          <path d="M778 190q-10 130-66 290M797 192q-12 140-60 250" fill="none" stroke-width="3"/>
          <path d="M707 505v-25M722 507v-25" fill="none" stroke-width="4"/>
          <path d="M666 442l25-12v30l-12 14-15-4z" fill="#8b9a9c"/>
        </g>
        <g id="clamp"><path d="M373 148l24-4-4 28-26 4z" fill="#8a1010" stroke="#111" stroke-width="3"/><circle cx="382" cy="160" r="5" fill="#2a6ab0" stroke="#111" stroke-width="2"/><path d="M366 166l-10-8" stroke="#087f7f" stroke-width="6"/><circle cx="350" cy="155" r="10" fill="#f31515"/></g>
        <use href="#clamp" x="-56" y="82"/><use href="#clamp" x="-103" y="165"/><use href="#clamp" x="359" y="53"/><use href="#clamp" x="347" y="133"/><use href="#clamp" x="328" y="213"/><use href="#clamp" x="302" y="292"/>
        <g id="clamp2"><path d="M476 138l26-6 4 20-28 12z" fill="#8a1010" stroke="#111" stroke-width="3"/><circle cx="489" cy="149" r="5" fill="#2a6ab0" stroke="#111" stroke-width="2"/><path d="M484 170l20-8M494 160l12 8" stroke="#0c6a6a" stroke-width="6"/><circle cx="512" cy="172" r="10" fill="#f31515"/></g>
        <use href="#clamp2" x="-55" y="71"/><use href="#clamp2" x="-101" y="147"/><use href="#clamp2" x="-140" y="223"/><use href="#clamp2" x="350" y="78"/><use href="#clamp2" x="331" y="167"/><use href="#clamp2" x="305" y="254"/>
        <g stroke="#3b3b00" stroke-width="2"><path d="M414 135l10-3 7 40-10 4z" fill="#aa9a1c"/><path d="M316 292l14-4v38l-12 2z" fill="#7a8a10"/><path d="M276 352l12-4 3 36-11 2z" fill="#18b51c"/><path d="M291 350l12-3 1 44-12 8z" fill="#aa9a1c"/><path d="M772 200l12-2 4 42-10 4z" fill="#aa9a1c"/><path d="M733 368l14-4 2 38-14 4z" fill="#3fa61c"/><path d="M702 430l10-3v32l-10 2z" fill="#18b51c"/><path d="M713 425l14-2-2 44-12 8z" fill="#aa9a1c"/></g>
        <path d="M424 126l14 4M367 203l14 4M432 174l14 4M381 250l14 4M311 272l14 4M331 336l14 4M288 402l12 2M752 227l14 3M785 281l14 3M736 318l14 3M762 376l14 3M709 407l14 3M732 462l14 3" stroke="#1470a8" stroke-width="6"/>
        <path d="M402 178l18-8 6 10-16 10zM352 256l14-6 8 12-16 6zM758 284l12-2 2 20-10 2zM757 332l14-2v16l-14 2z" fill="#176f70" stroke="#111"/>
        <g fill="#fff" stroke="#222" stroke-width="2"><circle cx="527" cy="227" r="4"/><circle cx="462" cy="297" r="4"/><circle cx="410" cy="368" r="4"/><circle cx="371" cy="430" r="4"/><circle cx="238" cy="421" r="4"/><circle cx="862" cy="277" r="4"/><circle cx="842" cy="380" r="4"/><circle cx="821" cy="443" r="4"/><circle cx="787" cy="521" r="4"/><circle cx="661" cy="505" r="4"/></g>
      </svg>

      <form class="dialog" aria-label="图层设置">
        <div class="dlg-title"><svg class="i14"><use href="#gear-bold"/></svg><span>图层设置</span>
          <button type="button" aria-label="重置"><svg class="i14"><use href="#reset"/></svg></button><button type="button" class="q" aria-label="对话框帮助">?</button><button type="button" aria-label="关闭对话框"><svg class="i14"><use href="#cross"/></svg></button></div>
        <div class="dlg-body">
          <fieldset>
            <h4><i class="tri teal"></i>查找以下对象所在的图层</h4>
            <div class="pick"><span>选择对象 (0)</span><button type="button" aria-label="选择对象"><svg class="i24"><use href="#aim"/></svg></button></div>
          </fieldset>
          <fieldset>
            <h4><i class="tri teal"></i>工作层</h4>
            <label class="drow">工作层<input type="text" class="num" value="32"></label>
          </fieldset>
          <fieldset>
            <h4><i class="tri teal"></i>图层</h4>
            <label class="drow">按范围/类别选择图层<input type="text"></label>
            <label class="crow"><input type="checkbox" class="soft">类别显示</label>
            <label class="drow tall dim">类别过滤器<span class="combo"><select disabled><option>*</option></select></span></label>
            <div class="layers">
              <table>
                <colgroup><col class="w150"><col class="w150"><col class="w85"><col class="w150"><col></colgroup>
                <thead><tr><th>名称<i class="tri up"></i></th><th>描述</th><th>仅可见</th><th>对象数</th><th>类别</th></tr></thead>
                <tbody>
                  <tr><td><label class="lname"><i class="twig"></i><input type="checkbox" checked><span>1</span></label></td><td>Product Final Solid; ;</td><td><input type="checkbox" aria-label="1 仅可见"></td><td>676</td><td>00_</td></tr>
                  <tr><td><label class="lname"><i class="twig"></i><input type="checkbox" checked><span>30</span></label></td><td>治具</td><td><input type="checkbox" aria-label="30 仅可见"></td><td>865</td><td>治具</td></tr>
                  <tr><td><label class="lname"><i class="twig"></i><input type="checkbox"><span>31</span></label></td><td>治具</td><td><input type="checkbox" aria-label="31 仅可见"></td><td>2244</td><td>治具</td></tr>
                  <tr class="cur"><td><div class="lname"><i class="twig"></i><svg class="i16"><use href="#work"/></svg><span>32(工作)</span></div></td><td>治具</td><td></td><td>1166</td><td>治具</td></tr>
                  <tr class="pre"><td><label class="lname"><i class="twig"></i><input type="checkbox"><span>33</span></label></td><td>治具</td><td><input type="checkbox" aria-label="33 仅可见"></td><td>85</td><td>治具</td></tr>
                  <tr class="focus"><td><label class="lname"><i class="twig t-last"></i><input type="checkbox" checked><span>61</span></label></td><td>Fixed Datum</td><td><input type="checkbox" aria-label="61 仅可见"></td><td>8</td><td>03_</td></tr>
                  <tr><td></td><td></td><td></td><td></td><td></td></tr>
                  <tr><td></td><td></td><td></td><td></td><td></td></tr>
                  <tr class="end"><td></td><td></td><td></td><td></td><td></td></tr>
                </tbody>
              </table>
              <div class="hscroll"><i></i></div>
            </div>
            <label class="drow tall">显示<span class="combo"><select><option>含有对象的图层</option></select></span></label>
            <div class="drow add">添加类别<button type="button" aria-label="添加类别"><svg class="i24"><use href="#layers"/></svg></button></div>
            <h4 class="boxed"><i class="tri right teal"></i>图层控制</h4>
          </fieldset>
          <fieldset class="flat"><h4><i class="tri right teal"></i>设置</h4></fieldset>
          <div class="shrink"><i class="tri up"></i></div>
          <div class="actions"><button type="button">关闭</button></div>
        </div>
      </form>
    </div>
  </section>
</main>

<footer class="status">
  <span>选择对象以高亮显示图层，对图层执行 MB3 以将对象移动或复制到图层</span>
  <span class="notice"><svg class="i16"><use href="#bell"/></svg>3 通知</span>
</footer>

<div class="ime">
  <svg class="logo" viewBox="0 0 32 30"><path d="M4 4l21-4q3 0 3 3l4 20q0 3-3 4L9 30q-3 0-4-3L0 8q0-3 4-4z" fill="url(#ime)"/><path d="M25 7Q12 4 7 9t9 6 7 6-16 1" fill="none" stroke="#fff" stroke-width="4"/></svg>
  <b>中</b>
  <svg class="i16" viewBox="0 0 16 16"><circle cx="5" cy="6" r="2" fill="none" stroke="#0a6cd6" stroke-width="1.500"/><path d="M11 9h3v3l-2 3" fill="none" stroke="#0a6cd6" stroke-width="2"/></svg>
  <svg class="i16" viewBox="0 0 16 16"><rect x="5" y="0" width="6" height="10" rx="3" fill="#0a6cd6"/><path d="M3 7q0 5 5 5t5-5M8 12v3M5 15h6" fill="none" stroke="#0a6cd6" stroke-width="1.500"/></svg>
  <svg class="i16" viewBox="0 0 16 16"><path d="M1 3h14v11H1z" fill="none" stroke="#0a6cd6" stroke-width="1.800" stroke-linejoin="round"/><path d="M3 6h2M7 6h2M11 6h2M3 8.500h2M7 8.500h2M11 8.500h2M4 11.500h8" stroke="#0a6cd6" stroke-width="1.300"/></svg>
  <svg class="i18" viewBox="0 0 18 18"><path d="M1 6l4-2q3 2 6 0l4 2-1 4h-2v7H4v-7H2z" fill="url(#shirt)"/><circle cx="15" cy="3" r="3" fill="#ff5533"/></svg>
  <svg class="i16" viewBox="0 0 16 16"><path d="M4 2h8q4 1 4 7-1 3-4 1H4q-3 2-4-1 0-6 4-7z" fill="#0a6cd6"/><path d="M3 6h4M5 4v4M10 6h1M12 7h1" stroke="#fff" stroke-width="1.400"/><path d="M1 13l3 2M15 13l-3 2" stroke="#0a6cd6" stroke-width="2"/></svg>
  <svg class="i16" viewBox="0 0 16 16"><path d="M1 2h6v6H1zM1 9h6v6H1zM9 9h6v6H9z" fill="#0a6cd6"/><circle cx="12" cy="5" r="3" fill="#0a6cd6"/></svg>
</div>
<div class="watermark">CSDN @山涧果子</div>
<script src="script.js"></script>
</body>
</html>
```
FILE: styles.css
```css
* { box-sizing: border-box; }
html, body { height: 100%; }
body { margin: 0; display: flex; flex-direction: column; overflow: hidden; background: #fff; color: #1c1c1c; font: 12px/16px "Noto Sans", "Noto Sans CJK SC", sans-serif; white-space: nowrap; }
button, input, select { font: inherit; color: inherit; margin: 0; }
button { display: inline-flex; align-items: center; justify-content: center; padding: 0; border: 0; background: none; }
a { color: inherit; text-decoration: none; }
h2, h3, h4 { margin: 0; font-weight: 400; }
table { border-collapse: separate; border-spacing: 0; table-layout: fixed; width: 100%; }
svg { flex: none; display: block; }
.sprite { position: absolute; width: 0; height: 0; }
.ln { fill: none; stroke: currentColor; }
.i12 { width: 12px; height: 12px; }
.i14 { width: 14px; height: 14px; }
.i16 { width: 16px; height: 16px; }
.i18 { width: 18px; height: 18px; }
.i20 { width: 20px; height: 20px; }
.i24 { width: 24px; height: 24px; }
.i32 { width: 32px; height: 32px; }

.tri { flex: none; display: inline-block; width: 6px; height: 4px; background: currentColor; clip-path: polygon(0 0, 100% 0, 50% 100%); }
.tri.up { width: 9px; height: 5px; clip-path: polygon(50% 0, 100% 100%, 0 100%); }
.tri.right { width: 4px; height: 8px; clip-path: polygon(0 0, 100% 50%, 0 100%); }
.tri.teal { color: #006487; }
.tri.teal:not(.right) { width: 8px; height: 5px; }
.tri.bar { height: 7px; clip-path: polygon(0 0, 100% 0, 100% 15%, 0 15%, 0 42%, 100% 42%, 50% 100%, 0 42%); }

.combo { display: grid; }
.combo > select, .combo::after { grid-area: 1 / 1; }
.combo::after { content: ""; align-self: center; justify-self: end; width: 8px; height: 5px; margin-right: 5px; background: #1c1c1c; clip-path: polygon(0 0, 100% 0, 50% 100%); pointer-events: none; }
select { appearance: none; width: 100%; border: 1px solid #6f6f6f; border-radius: 0; background: #fff; padding: 0 2px; }
input[type="text"] { border: 1px solid #6f6f6f; border-radius: 0; background: #fff; padding: 0 2px; outline: 0; }

/* title bar and menu */
.topbar { background: linear-gradient(90deg, #00658a, #057aa6); color: #fff; }
.titlebar { display: flex; align-items: center; height: 26px; }
.quick { display: flex; align-items: center; gap: 7px; padding-left: 3px; width: 440px; }
.nx { font: 700 21px/24px "Open Sans", sans-serif; width: 36px; }
.vsep { width: 1px; height: 18px; margin: 0 -1px; background: #00506e; }
.quick .off { color: #3c8fae; }
.win-menu { gap: 4px; font-size: 11px; }
.title { flex: 1; text-align: center; }
.siemens { font: 700 12px/16px "DejaVu Sans", sans-serif; padding-top: 2px; }
.winctl { display: flex; gap: 8px; padding: 0 7px 0 26px; }
.menubar { display: flex; align-items: center; height: 30px; }
.tabs { align-self: flex-start; flex: 1; display: flex; font-size: 13px; }
.tabs a { padding: 5px 11px 0; height: 28px; line-height: 18px; border-bottom: 2px solid transparent; }
.tabs .file { width: 86px; padding-left: 20px; }
.tabs .on { color: #ffc846; border-color: #ffc846; }
.find { display: flex; align-items: center; width: 178px; height: 21px; background: #fff; color: #333; border: 1px solid #777; }
.find input { flex: 1; min-width: 0; border: 0; background: none; padding: 0; }
.find input::placeholder { color: #9a9a9a; }
.menu-icons { display: flex; gap: 10px; padding: 0 6px 0 10px; }

/* ribbon */
.ribbon { display: flex; height: 94px; padding-top: 5px; border-bottom: 1px solid #d9d9d9; font-size: 11px; }
.group { display: flex; flex-direction: column; height: 85px; border-right: 1px solid #d2d2d2; }
.gbody { flex: 1; }
.gfoot { display: flex; align-items: center; height: 12px; padding-right: 8px; }
.gfoot span { flex: 1; text-align: center; color: #006487; }
.ribbon > .tail, .selbar > .tail { margin-left: auto; margin-right: 6px; }
.ribbon > .tail { align-self: flex-end; margin-bottom: 8px; }
.big { flex-direction: column; justify-content: flex-start; gap: 4px; }
.more { padding: 0 8px; }
.mid, .small { gap: 4px; justify-content: flex-start; }
.small { height: 16px; }
.small:disabled { color: #bcbcbc; }
.g-window { display: flex; align-items: flex-start; gap: 20px; padding: 0 14px 0 13px; }
.layouts { display: grid; grid-template-columns: repeat(3, 15px); gap: 8px 10px; }
.layouts svg { width: 15px; height: 15px; fill: none; stroke: #b0b0b0; }
.g-ops { display: grid; grid-template-columns: auto auto auto; grid-auto-rows: 24px; gap: 11px 9px; padding: 4px 10px 0 12px; }
.ratio { grid-column: 3; grid-row: 1 / 3; display: flex; flex-direction: column; align-items: center; gap: 4px; padding-top: 1px; }
.ratio input { width: 60px; height: 22px; }
.g-nav { display: grid; grid-template-columns: auto auto; grid-auto-rows: 16px; gap: 7px 10px; padding: 0 10px 0 12px; }
.g-content { display: flex; align-items: flex-start; gap: 8px; padding-left: 12px; }
.g-layer { display: flex; align-items: flex-start; gap: 6px; padding-left: 11px; }
.stack { display: flex; flex-direction: column; gap: 6px; align-items: flex-start; }
.worklayer { display: flex; align-items: center; gap: 4px; }
.worklayer .combo { width: 49px; height: 22px; }

/* selection bar */
.selbar { display: flex; align-items: center; height: 28px; border-bottom: 1px solid #aaa; }
.selbar .vline { width: 1px; height: 20px; background: #d2d2d2; }
.menu-btn { gap: 6px; padding: 0 8px 0 12px; font-size: 11px; }
.selbar .combo > select { height: 22px; font-size: 11px; }
.c-filter { width: 149px; margin-left: 12px; }
.c-scope { width: 156px; }
.funnel { margin: 0 9px; }
.ghost { color: #a8a8a8; }
.faint { opacity: .5; }
.tools { display: flex; align-items: center; gap: 9px; padding-left: 9px; }
.hot { width: 23px; height: 22px; margin: 0 -3px; background: #cce4e9; }

/* work area */
.work { flex: 1; min-height: 0; display: grid; grid-template-columns: 37px 306px 1fr; }
.rail { display: flex; flex-direction: column; background: #dcdcdc; border-right: 1px solid #a8a8a8; color: #444; }
.rail button { flex: none; height: 44px; padding-left: 3px; }
.rail .first { height: 33px; padding: 0 0 3px; }
.rail .on { margin: 0 -1px 0 3px; padding: 0; background: #fff; border: 1px solid #a8a8a8; border-right: 0; }
.navigator { display: flex; flex-direction: column; min-height: 0; padding: 0 9px 6px 8px; border-right: 1px solid #a8a8a8; }
.nav-title { display: flex; align-items: center; height: 27px; gap: 4px; padding-bottom: 2px; font-size: 12px; line-height: 16px; margin-left: -2px; }
.nav-title span { flex: 1; }
.nav-title button { width: 12px; height: 11px; border: 1px solid #111; border-top-width: 2px; margin-right: 2px; }
.tree { flex: 1; min-height: 0; display: flex; flex-direction: column; border: 1px solid #d0d0d0; background: #efefef; }
.tree-clip { flex: 1; min-height: 0; overflow: hidden; position: relative; }
.c39 { width: 39px; } .c24 { width: 24px; } .c28 { width: 28px; }
th { height: 21px; padding: 1px 0 0 6px; font-weight: 400; text-align: left; background: #efefef; border-right: 1px solid #d0d0d0; border-bottom: 1px solid #d0d0d0; overflow: hidden; }
th:last-child { border-right: 0; }
th .tri { margin: 0 0 2px 18px; }
td { height: 20px; padding: 0 0 0 4px; background: #fff; border-right: 1px solid #e6e6e6; border-bottom: 1px solid #e6e6e6; overflow: hidden; }
tr:nth-child(even) td { background: #f9f9f9; }
.tree td:first-child { padding-left: 9px; }
.node { display: flex; align-items: center; height: 19px; }
.node span { margin-left: 3px; }
.node.off span { color: #a3a3a3; }
.child { padding-left: 19px; }
.child svg + svg { margin-left: 1px; }
.twig { flex: none; width: 10px; height: 20px; display: flex; align-items: center; background: repeating-linear-gradient(#999 0 1px, transparent 1px 2px) 0 0 / 1px 100% no-repeat, repeating-linear-gradient(90deg, #999 0 1px, transparent 1px 2px) 0 50% / 100% 1px no-repeat; }
.t-first { background-position: 0 10px, 0 50%; }
.t-last { background-size: 1px 10px, 100% 1px; }
.child .twig { width: 9px; }
.exp { flex: none; width: 9px; height: 9px; margin-left: -4px; border: 1px solid #c4c4c4; background: linear-gradient(#111, #111) center / 5px 1px no-repeat #fff; }
.exp.plus { background: linear-gradient(#111, #111) center / 5px 1px no-repeat, linear-gradient(#111, #111) center / 1px 5px no-repeat, #fff; }
.vscroll { position: absolute; top: 22px; right: 0; bottom: 0; width: 17px; background: #efefef; padding: 17px 0 0 8px; }
.vscroll i { display: block; width: 2px; height: 17px; background: #8a8a8a; }
.hscroll { height: 17px; padding: 7px 0 0 17px; background: #efefef; }
.hscroll i { display: block; width: 65%; height: 2px; background: #858585; }
.splitter { height: 6px; margin: 2px 0; border: 1px solid #a5adad; background: #d9dcdb; }
.search { border: 1px solid #d9d9d9; padding: 0 3px 2px; margin-bottom: 1px; }
.search h3, .fold { display: flex; align-items: center; gap: 12px; height: 24px; padding-left: 4px; font-size: 14px; color: #006487; }
.search h3 { gap: 9px; margin-bottom: 2px; }
.fold { padding: 3px 0 0 9px; border-bottom: 2px solid #d2d2d2; }
.srow { display: flex; align-items: center; gap: 4px; height: 25px; }
.srow > input { flex: 1; min-width: 0; height: 23px; }
.srow button { width: 24px; height: 24px; border: 1px solid #6f6f6f; }
.srow .tight { margin-left: -2px; }
.auto { flex: 1; display: flex; align-items: center; gap: 5px; padding-left: 1px; }
.nomatch { margin-left: -2px; }

input[type="checkbox"] { appearance: none; flex: none; display: block; width: 14px; height: 14px; border: 1px solid #3c3c3c; background: #fff; }
input[type="checkbox"]:checked::after { content: ""; display: block; width: 12px; height: 12px; background: #333; clip-path: polygon(5% 55%, 22% 42%, 42% 66%, 82% 8%, 96% 18%, 46% 95%); }
input.soft { width: 13px; height: 13px; border-color: #666; border-radius: 3px; }
input.blue { width: 13px; height: 13px; border-radius: 2px; border-color: #0a63b8; background: #0a63b8; }
input.blue:checked::after { width: 11px; height: 11px; background: #fff; clip-path: polygon(12% 50%, 22% 42%, 42% 62%, 80% 22%, 88% 32%, 42% 78%); }

/* graphics window */
.graphics { display: flex; flex-direction: column; min-width: 0; }
.doc-tabs { border-bottom: 2px solid #005f87; }
.doc { display: flex; align-items: center; width: 132px; height: 25px; padding-left: 6px; background: #005f87; color: #fff; }
.doc span { margin: 0 6px 0 4px; }
.doc button { margin-left: 3px; color: #a9c6d4; }
.canvas { flex: 1; position: relative; overflow: hidden; }
.model { position: absolute; left: 797px; top: 205px; width: 380px; height: 240px; }
.blue-grid { fill: none; stroke: #1208e0; stroke-width: 3; stroke-dasharray: 14 2; }
.triad { position: absolute; left: 67px; top: 675px; width: 120px; height: 56px; font-size: 12px; }
.triad text { fill: #3fa642; }

.dialog { position: absolute; left: 42px; top: 0; width: 593px; }
.dlg-title { display: flex; align-items: center; height: 24px; padding: 0 8px 0 7px; gap: 8px; background: #005f87; color: #fff; font-size: 14px; }
.dlg-title span { flex: 1; }
.dlg-title .q { font-weight: 700; width: 12px; margin-right: 2px; }
.dlg-body { display: flex; flex-direction: column; gap: 2px; padding: 5px 5px 10px; background: #efefef; border: 1px solid #d6d6d6; border-top: 0; }
fieldset { min-width: 0; margin: 0; padding: 0 8px 8px; border: 1px solid #cfcfcf; background: #fff; display: flex; flex-direction: column; gap: 2px; }
fieldset.flat { padding-bottom: 0; }
h4 { display: flex; align-items: center; gap: 6px; height: 23px; font-size: 13px; font-weight: 700; color: #006487; }
h4:not(.boxed) { margin-bottom: 5px; }
.flat h4:not(.boxed) { margin: 0; }
h4 .right { margin: 0 2px; }
.pick { display: flex; gap: 2px; height: 32px; }
.pick span { flex: 1; background: #ffe075; line-height: 32px; }
.pick button { width: 32px; background: #ffe075; border: 1px solid #fdbd20; color: #444; }
.drow { display: flex; align-items: center; justify-content: space-between; height: 23px; }
.drow input { width: 82px; height: 23px; }
.drow .num { font: 17px/20px "Liberation Serif", serif; text-align: right; padding-right: 6px; }
.crow { display: flex; align-items: center; gap: 4px; height: 21px; padding-left: 1px; }
.tall { height: 25px; }
.tall .combo { width: 138px; height: 25px; }
.tall select { padding-left: 4px; }
.dim { color: #a3a3a3; }
.dim select { border-color: #b5b5b5; background: #f5f5f5; color: #777; opacity: 1; }
.dim .combo::after { background: #a3a3a3; }
.layers { border: 1px solid #d6d6d6; padding: 1px; }
.w150 { width: 150px; } .w85 { width: 85px; }
.layers td:first-child { padding-left: 9px; border-right-color: #111; }
.layers td:nth-child(3) { padding-left: 6px; }
.layers td:last-child { border-right: 0; }
.lname { display: flex; align-items: center; height: 19px; }
.lname input { margin-left: 1px; }
.lname span { flex: 1; margin-left: 1px; padding-left: 3px; line-height: 19px; }
.cur { font-weight: 700; }
.cur svg { margin-right: -1px; }
.pre td:not(:first-child), .focus td:not(:first-child) { border-bottom: 1px dotted #111; }
.focus span { border: 1px dotted #111; border-width: 1px 0 1px 1px; padding-left: 2px; line-height: 17px; }
.end td { height: 17px; border-bottom: 0; }
.layers .hscroll { height: 16px; }
.layers .hscroll i { width: 79%; }
.add { height: 32px; }
.add button { width: 32px; height: 32px; border: 1px solid #6f6f6f; }
.boxed { height: 25px; padding-left: 8px; margin-top: 2px; gap: 8px; border: 1px solid #cfcfcf; }
.shrink { display: flex; justify-content: center; align-items: center; height: 12px; border-bottom: 1px solid #cfcfcf; }
.actions { display: flex; justify-content: flex-end; padding: 6px 10px 0; }
.actions button { width: 54px; height: 25px; background: #005f87; color: #fff; }

.status { display: flex; align-items: center; justify-content: space-between; height: 23px; padding: 0 54px 1px 3px; border-top: 1px solid #a0a5a5; border-bottom: 1px solid #aeb6b8; font-size: 11px; font-weight: 600; }
.notice { display: flex; align-items: center; gap: 4px; font-weight: 400; }

.ime { position: fixed; right: 376px; bottom: 7px; display: flex; align-items: center; gap: 8px; height: 26px; padding: 0 3px 0 22px; background: #fff; border: 1px solid #b5cbe5; }
.ime .logo { position: absolute; left: -15px; top: -4px; width: 31px; height: 30px; }
.ime b { color: #0a6cd6; font-size: 15px; }
.watermark { position: fixed; right: 3px; bottom: 11px; font: 37px/44px "Noto Sans", "Noto Sans CJK SC", sans-serif; color: #d8d8d8; text-shadow: 1px 1px 1px #999; opacity: .8; pointer-events: none; }
```
FILE: script.js
```js
// Body features 1-24 are all hidden and up to date in the model history.
const rows = document.getElementById('tree-rows');
const icon = (name) => `<svg class="i16"><use href="#${name}"/></svg>`;
for (let n = 1; n <= 24; n++) {
  rows.insertAdjacentHTML('beforeend',
    `<tr><td><div class="node child off"><i class="twig"></i>${icon('eye-off')}${icon('body')}<span>体 (${n})</span></div></td><td></td><td>${icon('ok')}</td><td></td></tr>`);
}
```
